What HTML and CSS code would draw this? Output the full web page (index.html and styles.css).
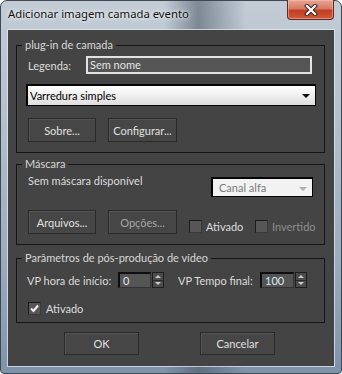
FILE: index.html
```html
<!DOCTYPE html>
<html lang="pt">
<head>
    <meta charset="UTF-8">
    <title>Adicionar imagem camada evento</title>
    <link rel="stylesheet" href="styles.css">
</head>
<body>
    <div class="window">
        <div class="titlebar">
            <span class="title">Adicionar imagem camada evento</span>
            <div class="close">
                <svg width="14" height="12" viewBox="0 0 14 12">
                    <path d="M3 2 L11 10 M11 2 L3 10" stroke="#3a2420" stroke-width="4.2" stroke-linecap="square" fill="none"/>
                    <path d="M3 2 L11 10 M11 2 L3 10" stroke="#fff" stroke-width="2.2" stroke-linecap="square" fill="none"/>
                </svg>
            </div>
        </div>

        <div class="client">
            <!-- plug-in -->
            <fieldset class="group group-plugin">
                <legend>plug-in de camada</legend>
                <div class="row caption-row">
                    <span class="label caption-label">Legenda:</span>
                    <div class="textbox">Sem nome</div>
                </div>
                <div class="select plugin-select">Varredura simples<span class="arrow"></span></div>
                <div class="row btn-row">
                    <div class="btn btn-sobre">Sobre...</div>
                    <div class="btn btn-config">Configurar...</div>
                </div>
            </fieldset>

            <!-- mask -->
            <fieldset class="group group-mask">
                <legend>Máscara</legend>
                <div class="row mask-row">
                    <span class="label mask-label">Sem máscara disponível</span>
                    <div class="select select-disabled mask-select">Canal alfa<span class="arrow"></span></div>
                </div>
                <div class="row btn-row mask-buttons">
                    <div class="btn btn-sobre">Arquivos...</div>
                    <div class="btn btn-config disabled">Opções...</div>
                    <div class="check check-enabled"><span class="box"></span><span class="label">Ativado</span></div>
                    <div class="check"><span class="box"></span><span class="label disabled">Invertido</span></div>
                </div>
            </fieldset>

            <!-- video post -->
            <fieldset class="group group-video">
                <legend>Parâmetros de pós-produção de vídeo</legend>
                <div class="row spin-row">
                    <span class="label start-label">VP hora de início:</span>
                    <div class="spinfield start-field">0</div>
                    <div class="spinner"><span class="up"></span><span class="down"></span></div>
                    <span class="label end-label">VP Tempo final:</span>
                    <div class="spinfield end-field">100</div>
                    <div class="spinner"><span class="up"></span><span class="down"></span></div>
                </div>
                <div class="check video-check">
                    <span class="box checked">
                        <svg width="9" height="9" viewBox="0 0 9 9"><path d="M1 4.5 L3.5 7 L8 1.5" stroke="#f2f2f2" stroke-width="2" fill="none"/></svg>
                    </span>
                    <span class="label">Ativado</span>
                </div>
            </fieldset>

            <div class="dialog-buttons">
                <div class="btn btn-ok">OK</div>
                <div class="btn btn-ok">Cancelar</div>
            </div>
        </div>
    </div>
</body>
</html>
```

FILE: styles.css
```css
* {
    box-sizing: border-box;
}

body {
    margin: 0;
    background: #fff;
    font-family: 'Lato', sans-serif;
    font-size: 11px;
}

.window {
    width: 342px;
    height: 374px;
    display: flex;
    flex-direction: column;
    padding: 0 7px 7px;
    border: 1px solid #3e4853;
    border-radius: 7px 7px 4px 4px;
    background:
        linear-gradient(to right, rgba(255,255,255,0) 0%, rgba(255,255,255,0) 48%, rgba(70,82,96,0.55) 58%, rgba(255,255,255,0) 72%),
        linear-gradient(to bottom, #c3ccd5 0%, #b4c0cc 30%, #9aabbd 70%, #7f93a8 100%);
}

.titlebar {
    height: 29px;
    display: flex;
    align-items: flex-start;
}

.title {
    margin-top: 5px;
    font-family: 'Noto Sans', sans-serif;
    font-size: 11.3px;
    color: #111;
    text-shadow: 0 0 6px rgba(255,255,255,0.9), 0 0 3px rgba(255,255,255,0.8);
}

.close {
    margin-left: auto;
    margin-top: -1px;
    width: 47px;
    height: 20px;
    display: flex;
    align-items: center;
    justify-content: center;
    border: 1px solid #5b2a22;
    border-top: none;
    border-radius: 0 0 4px 4px;
    background: linear-gradient(to bottom, #e8a595 0%, #d77a64 45%, #c13d24 55%, #cf5a3c 100%);
    box-shadow: inset 0 0 0 1px rgba(255,200,180,0.5);
}

.client {
    flex: 1;
    background: #444;
    padding: 8px 9px 0 8px;
    box-shadow: 0 0 0 1px rgba(225,232,240,0.75);
    color: #dcdcdc;
}

.group {
    margin: 0;
    min-width: 0;
    border: 1px solid #161616;
    padding: 4px 8px 10px 9px;
}

.group legend {
    padding: 0 3px;
    margin-left: -4px;
    line-height: 14px;
    color: #d8d8d8;
}

.row {
    display: flex;
    align-items: center;
}

.label {
    white-space: nowrap;
}

.disabled {
    color: #8e8e8e;
}

.caption-row {
    height: 18px;
}

.caption-label {
    width: 60px;
    padding-left: 2px;
}

.textbox {
    width: 226px;
    height: 18px;
    padding-left: 2px;
    line-height: 14px;
    background: #555;
    border: 2px solid #e2e2e2;
    color: #e4e4e4;
}

.select {
    position: relative;
    height: 22px;
    padding-left: 2px;
    line-height: 20px;
    border: 1px solid #050505;
    border-width: 2px 1px 1px 2px;
    background: linear-gradient(to bottom, #ffffff, #dedede);
    color: #000;
}

.select .arrow {
    position: absolute;
    right: 5px;
    top: 8px;
    border-left: 4px solid transparent;
    border-right: 4px solid transparent;
    border-top: 4px solid #000;
}

.plugin-select {
    margin-top: 10px;
}

.btn-row {
    margin-top: 12px;
    height: 24px;
}

.btn {
    height: 24px;
    display: flex;
    align-items: center;
    justify-content: center;
    background: #464646;
    border: 1px solid #2a2a2a;
    box-shadow: inset 1px 1px 0 #555;
    color: #e0e0e0;
}

.btn.disabled {
    color: #a6a6a6;
}

.btn-sobre {
    width: 68px;
    margin-left: 2px;
}

.btn-config {
    width: 69px;
    margin-left: 12px;
}

.group-mask {
    margin-top: 4px;
    padding-top: 6px;
}

.mask-row {
    align-items: flex-start;
    height: 20px;
}

.mask-label {
    padding-left: 2px;
    margin-top: -3px;
}

.select-disabled {
    color: #7a7a7a;
    background: #f2f2f2;
}

.select-disabled .arrow {
    border-top-color: #b0b0b0;
}

.mask-select {
    width: 102px;
    height: 20px;
    line-height: 18px;
    padding-left: 6px;
    margin-left: auto;
    margin-right: 3px;
}

.mask-buttons {
    margin-top: 13px;
    align-items: flex-end;
}

.check {
    display: flex;
    align-items: center;
}

.mask-buttons .check {
    margin-bottom: 1px;
}

.check-enabled {
    width: 66px;
    margin-left: 12px;
}

.box {
    width: 13px;
    height: 13px;
    margin-right: 4px;
    display: flex;
    align-items: center;
    justify-content: center;
    background: #565656;
    border: 1px solid #1c1c1c;
    border-right-color: #3a3a3a;
    border-bottom-color: #3a3a3a;
}

.group-video {
    margin-top: 6px;
    padding-top: 7px;
    padding-bottom: 7px;
}

.spin-row {
    height: 16px;
}

.start-label {
    width: 92px;
    padding-left: 1px;
}

.end-label {
    width: 82px;
    margin-left: 14px;
}

.spinfield {
    height: 16px;
    padding-left: 3px;
    line-height: 13px;
    background: #555;
    border-top: 2px solid #0e0e0e;
    border-left: 2px solid #0e0e0e;
    border-right: 1px solid #333;
    border-bottom: 1px solid #333;
    color: #dfe9f2;
}

.start-field {
    width: 33px;
}

.end-field {
    width: 34px;
}

.spinner {
    width: 12px;
    height: 16px;
    margin-left: 1px;
    display: flex;
    flex-direction: column;
    background: #4c4c4c;
    border: 1px solid #1e1e1e;
}

.spinner span {
    flex: 1;
    display: flex;
    align-items: center;
    justify-content: center;
}

.spinner .up::before,
.spinner .down::before {
    content: "";
    border-left: 3px solid transparent;
    border-right: 3px solid transparent;
}

.spinner .up::before {
    border-bottom: 3px solid #c8c8c8;
}

.spinner .down {
    border-top: 1px solid #2a2a2a;
}

.spinner .down::before {
    border-top: 3px solid #c8c8c8;
}

.video-check {
    margin-top: 14px;
    padding-left: 2px;
    height: 13px;
}

.video-check .box {
    margin-right: 5px;
}

.dialog-buttons {
    display: flex;
    gap: 61px;
    margin-top: 9px;
    padding-left: 48px;
}

.btn-ok {
    width: 75px;
    height: 23px;
}
```
